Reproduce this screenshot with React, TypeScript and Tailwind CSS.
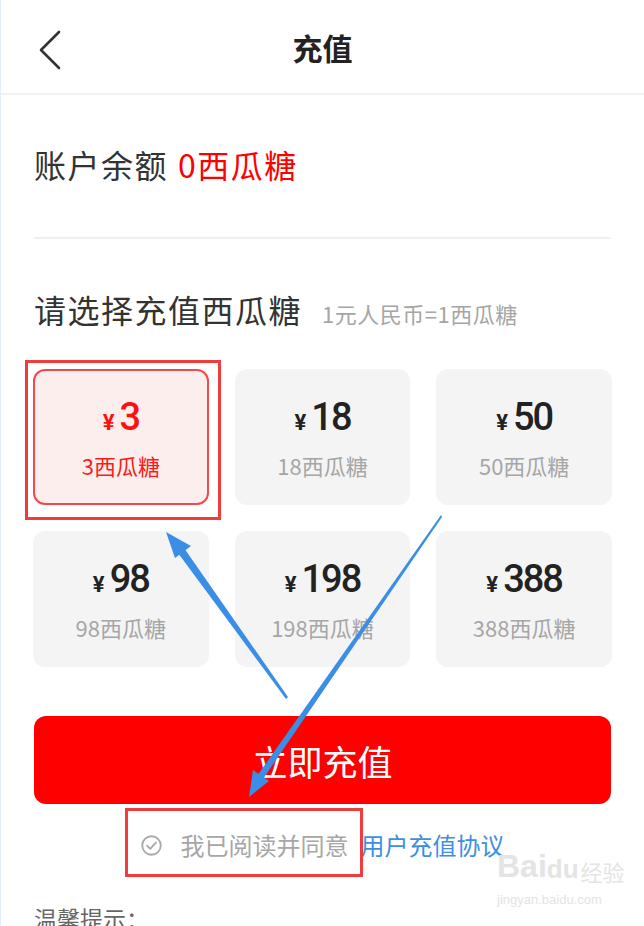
interface Pack {
  price: number
  amount: number
}

const packs: Pack[] = [
  { price: 3, amount: 3 },
  { price: 18, amount: 18 },
  { price: 50, amount: 50 },
  { price: 98, amount: 98 },
  { price: 198, amount: 198 },
  { price: 388, amount: 388 },
]

const cjk = "font-['Noto_Sans_CJK_SC','Noto_Sans',sans-serif]"

function PackCard({ pack, selected }: { pack: Pack; selected: boolean }) {
  return (
    <div
      className={`h-[136px] rounded-[12px] flex flex-col items-center justify-center ${
        selected ? 'bg-[#fdeeee] border-2 border-[#f5484a]' : 'bg-[#f4f4f4]'
      }`}
    >
      <div className={`flex items-baseline font-['Roboto',sans-serif] font-medium leading-none ${selected ? 'text-[#ff1010]' : 'text-[#222]'}`}>
        <span className="text-[22px] mr-[5px] font-bold">¥</span>
        <span className="text-[38px] tracking-[-2px]">{pack.price}</span>
      </div>
      <div className={`mt-[18px] text-[22px] leading-none ${selected ? 'text-[#ff1a1a]' : 'text-[#a6a6a6]'}`}>
        {pack.amount}西瓜糖
      </div>
    </div>
  )
}

export default function App() {
  return (
    <div className={`relative w-[644px] h-[926px] overflow-hidden bg-white border-l border-[#e6eef8] ${cjk}`}>
      <header className="relative h-[95px] flex items-center justify-center border-b-2 border-[#f2f2f2]">
        <svg className="absolute left-[38px] top-[30px]" width="24" height="40" viewBox="0 0 24 40">
          <polyline points="20,2 2,20 20,38" fill="none" stroke="#333" strokeWidth="2.6" strokeLinecap="round" strokeLinejoin="round" />
        </svg>
        <h1 className="text-[30px] font-bold text-[#222] leading-none">充值</h1>
      </header>

      <div className="px-[33px]">
        <div className="h-[144px] flex items-center border-b-2 border-[#f0f0f0] pb-[4px]">
          <span className="text-[32px] tracking-[1.5px] text-[#333] leading-none">账户余额</span>
          <span className="ml-[10px] text-[32px] tracking-[1.5px] text-[#ff0000] leading-none">0西瓜糖</span>
        </div>

        <div className="mt-[54px] flex items-end">
          <span className="text-[32px] tracking-[1.5px] text-[#333] leading-none">请选择充值西瓜糖</span>
          <span className="ml-[20px] text-[22px] tracking-[0.5px] text-[#a6a6a6] leading-none mb-[1px]">1元人民币=1西瓜糖</span>
        </div>

        <div className="mt-[44px] grid grid-cols-3 gap-[26px] -mx-[1px]">
          {packs.map((pack, i) => (
            <PackCard key={pack.price} pack={pack} selected={i === 0} />
          ))}
        </div>

        <button className="mt-[49px] w-full h-[88px] rounded-[12px] bg-[#ff0000] text-white text-[35px] leading-none">
          立即充值
        </button>

        <div className="mt-[29px] flex items-center justify-center">
          <svg width="21" height="21" viewBox="0 0 20 20" className="mr-[19px]">
            <circle cx="10" cy="10" r="8.8" fill="none" stroke="#a8a8a8" strokeWidth="1.7" />
            <path d="M5.8 10.2l3 3 5.4-6" fill="none" stroke="#a8a8a8" strokeWidth="1.7" strokeLinecap="round" strokeLinejoin="round" />
          </svg>
          <span className="text-[24px] text-[#a6a6a6] leading-none">我已阅读并同意</span>
          <span className="ml-[12px] text-[24px] text-[#3d8fe0] leading-none">用户充值协议</span>
        </div>

        <div className="mt-[50px] text-[23px] text-[#666] leading-none">温馨提示：</div>
      </div>

      {/* annotation boxes */}
      <div className="absolute left-[24px] top-[360px] w-[196px] h-[160px] border-[3px] border-[#f03c3c]" />
      <div className="absolute left-[124px] top-[808px] w-[238px] h-[69px] border-[3px] border-[#f03c3c]" />

      {/* annotation arrows */}
      <svg className="absolute left-0 top-0 pointer-events-none" width="644" height="926">
        <polygon points="440,515 441,517 262,779 256,776" fill="#3a8ee6" />
        <polygon points="248,797 252,770 268,781" fill="#3a8ee6" />
        <polygon points="287,697 285,699 177,553 183,548" fill="#3a8ee6" />
        <polygon points="165,532 190,546 174,558" fill="#3a8ee6" />
      </svg>

      {/* watermark */}
      <div className="absolute left-[496px] top-[850px] flex flex-col items-start text-[#e4e4e4] font-['Liberation_Sans',sans-serif]">
        <div className="flex items-end leading-none">
          <span className="text-[32px] font-bold">Bai</span>
          <span className="text-[26px] font-bold">du</span>
          <span className={`ml-[2px] text-[22px] ${cjk}`}>经验</span>
        </div>
        <span className="text-[13px] mt-[8px]">jingyan.baidu.com</span>
      </div>
    </div>
  )
}
